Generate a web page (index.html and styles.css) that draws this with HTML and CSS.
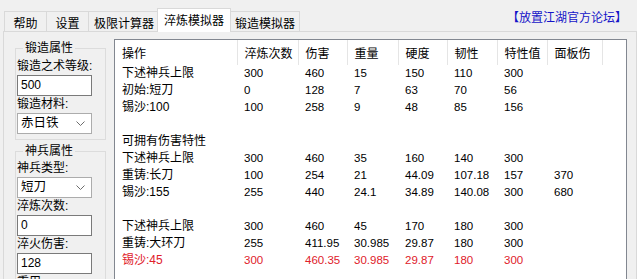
FILE: index.html
```html
<!DOCTYPE html>
<html lang="zh-CN">
<head>
    <meta charset="UTF-8">
    <title>淬炼模拟器</title>
    <link rel="stylesheet" href="styles.css">
</head>
<body>
    <div class="window">
        <div class="topbar">
            <div class="tabs">
                <div class="tab w42">帮助</div>
                <div class="tab w42">设置</div>
                <div class="tab w71">极限计算器</div>
                <div class="tab w74 active">淬炼模拟器</div>
                <div class="tab w69">锻造模拟器</div>
            </div>
            <a class="forum" href="#">【放置江湖官方论坛】</a>
        </div>

        <div class="page">
            <div class="side">
                <fieldset class="group first">
                    <legend>锻造属性</legend>
                    <div class="label">锻造之术等级:</div>
                    <div class="textbox">500</div>
                    <div class="label">锻造材料:</div>
                    <div class="combo">
                        <span>赤日铁</span>
                        <svg width="9" height="5" viewBox="0 0 9 5"><polyline points="0.5,0.5 4.5,4.5 8.5,0.5" fill="none" stroke="#6d6d6d" stroke-width="1"/></svg>
                    </div>
                </fieldset>

                <fieldset class="group second">
                    <legend>神兵属性</legend>
                    <div class="label">神兵类型:</div>
                    <div class="combo">
                        <span>短刀</span>
                        <svg width="9" height="5" viewBox="0 0 9 5"><polyline points="0.5,0.5 4.5,4.5 8.5,0.5" fill="none" stroke="#6d6d6d" stroke-width="1"/></svg>
                    </div>
                    <div class="label">淬炼次数:</div>
                    <div class="textbox">0</div>
                    <div class="label">淬火伤害:</div>
                    <div class="textbox">128</div>
                    <div class="label">重用</div>
                </fieldset>
            </div>

            <div class="listview">
                <table class="grid">
                    <colgroup>
                        <col style="width:122px">
                        <col style="width:61px">
                        <col style="width:49px">
                        <col style="width:51px">
                        <col style="width:49px">
                        <col style="width:50px">
                        <col style="width:50px">
                        <col style="width:55px">
                    </colgroup>
                    <thead>
                        <tr><th>操作</th><th>淬炼次数</th><th>伤害</th><th>重量</th><th>硬度</th><th>韧性</th><th>特性值</th><th>面板伤</th></tr>
                    </thead>
                    <tbody>
                        <tr><td>下述神兵上限</td><td>300</td><td>460</td><td>15</td><td>150</td><td>110</td><td>300</td><td></td></tr>
                        <tr><td>初始:短刀</td><td>0</td><td>128</td><td>7</td><td>63</td><td>70</td><td>56</td><td></td></tr>
                        <tr><td>锡沙:100</td><td>100</td><td>258</td><td>9</td><td>48</td><td>85</td><td>156</td><td></td></tr>
                        <tr><td>&nbsp;</td><td></td><td></td><td></td><td></td><td></td><td></td><td></td></tr>
                        <tr><td>可拥有伤害特性</td><td></td><td></td><td></td><td></td><td></td><td></td><td></td></tr>
                        <tr><td>下述神兵上限</td><td>300</td><td>460</td><td>35</td><td>160</td><td>140</td><td>300</td><td></td></tr>
                        <tr><td>重铸:长刀</td><td>100</td><td>254</td><td>21</td><td>44.09</td><td>107.18</td><td>157</td><td>370</td></tr>
                        <tr><td>锡沙:155</td><td>255</td><td>440</td><td>24.1</td><td>34.89</td><td>140.08</td><td>300</td><td>680</td></tr>
                        <tr><td>&nbsp;</td><td></td><td></td><td></td><td></td><td></td><td></td><td></td></tr>
                        <tr><td>下述神兵上限</td><td>300</td><td>460</td><td>45</td><td>170</td><td>180</td><td>300</td><td></td></tr>
                        <tr><td>重铸:大环刀</td><td>255</td><td>411.95</td><td>30.985</td><td>29.87</td><td>180</td><td>300</td><td></td></tr>
                        <tr class="best"><td>锡沙:45</td><td>300</td><td>460.35</td><td>30.985</td><td>29.87</td><td>180</td><td>300</td><td></td></tr>
                    </tbody>
                </table>
            </div>
        </div>
    </div>
</body>
</html>
```

FILE: styles.css
```css
body {
    margin: 0;
    background: #f0f0f0;
    font-family: "Liberation Sans", "Noto Sans CJK SC", sans-serif;
    font-size: 12px;
    color: #000;
}
.window {
    width: 637px;
    height: 279px;
    overflow: hidden;
}

/* tab strip */
.topbar {
    height: 31px;
    display: flex;
    justify-content: space-between;
    align-items: flex-end;
}
.tabs {
    display: flex;
    align-items: flex-end;
    padding-left: 4px;
}
.tab {
    box-sizing: border-box;
    height: 20px;
    border: 1px solid #d9d9d9;
    border-bottom: none;
    margin-right: -1px;
    background: #f0f0f0;
    display: flex;
    align-items: center;
    justify-content: center;
    padding-top: 1px;
}
.w42 { width: 43px; }
.w71 { width: 72px; }
.w74 { width: 74px; }
.w69 { width: 70px; }
.tab.active {
    position: relative;
    z-index: 1;
    height: 24px;
    margin: 0 -1px -1px -2px;
    background: #fff;
    padding-top: 0;
    padding-bottom: 2px;
}
.forum {
    align-self: flex-start;
    margin: 11px 10px 0 0;
    line-height: 14px;
    color: #1414c8;
    text-decoration: none;
}

/* page */
.page {
    margin-left: 3px;
    width: 632px;
    height: 260px;
    border: 1px solid #d9d9d9;
    display: flex;
}
.side {
    width: 107px;
    flex: none;
}
.group {
    margin: 0 0 0 11px;
    padding: 0 0 5px 1px;
    border: 1px solid #dcdcdc;
    box-sizing: border-box;
    width: 91px;
}
.group.first {
    margin-top: 8px;
}
.group.second {
    margin-top: 3px;
}
.group legend {
    margin-left: 6px;
    padding: 0 2px;
    line-height: 16px;
    font-size: 12px;
}
.label {
    line-height: 17px;
    white-space: nowrap;
}
.group.first .label:first-of-type {
    margin-top: 2px;
}
.group.second .label:first-of-type {
    margin-top: 1px;
}
.textbox,
.combo {
    box-sizing: border-box;
    width: 75px;
    height: 21px;
    background: #fff;
    border: 1px solid #7a7a7a;
    padding-left: 3px;
    line-height: 19px;
}
.combo {
    border-color: #acacac;
    display: flex;
    align-items: center;
    justify-content: space-between;
    padding-right: 6px;
    font-size: 12.5px;
}

/* list view */
.listview {
    margin: 7px 0 0 3px;
    width: 513px;
    height: 260px;
    box-sizing: border-box;
    border: 1px solid #828790;
    background: #fff;
    flex: none;
}
.grid {
    table-layout: fixed;
    width: 487px;
    border-collapse: collapse;
}
.grid th {
    height: 25px;
    padding: 0 0 0 7px;
    text-align: left;
    font-weight: normal;
    border-right: 1px solid #e5e5e5;
    white-space: nowrap;
    overflow: hidden;
}
.grid td {
    height: 17px;
    padding: 0 0 0 7px;
    line-height: 17px;
    white-space: nowrap;
    font-size: 11.5px;
}
.grid td:first-child {
    font-size: 12px;
}
.grid tr.best td {
    color: #e0202a;
}
```
